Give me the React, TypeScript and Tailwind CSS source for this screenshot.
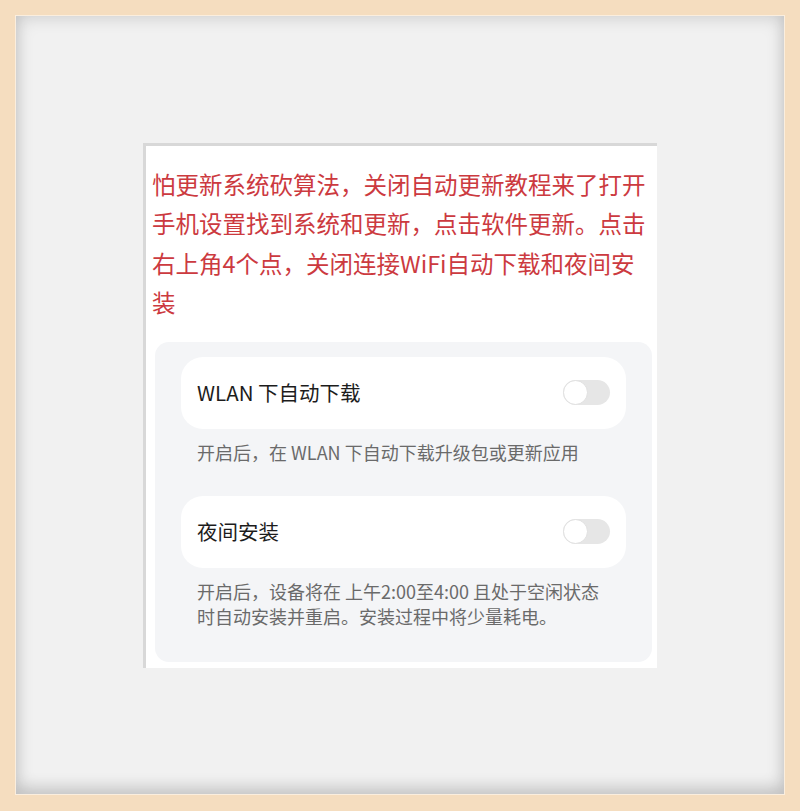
import React from "react";

const CJK = '"Noto Sans CJK SC", "Noto Sans", sans-serif';

function Toggle() {
  return (
    <div className="relative h-[25px] w-[47px] rounded-full bg-[#e6e6e6]">
      <div className="absolute left-0 top-0 h-[25px] w-[25px] rounded-full border-[1.5px] border-[#e0e0e0] bg-white" />
    </div>
  );
}

function SettingRow({ label }: { label: string }) {
  return (
    <div className="flex h-[72px] items-center justify-between rounded-[22px] bg-white pl-[16px] pr-[16px]">
      <span className="text-[20.5px] text-[#1c1c1c]">{label}</span>
      <Toggle />
    </div>
  );
}

export default function App() {
  const heading = [
    "怕更新系统砍算法，关闭自动更新教程来了打开",
    "手机设置找到系统和更新，点击软件更新。点击",
    "右上角4个点，关闭连接WiFi自动下载和夜间安",
    "装",
  ];

  return (
    <div
      className="h-[811px] w-[800px] bg-[#f5ddbf] pb-[16px] pl-[15px] pr-[15px] pt-[15px]"
      style={{ fontFamily: CJK }}
    >
      <div className="flex h-full w-full items-center justify-center border border-[#fbeede] bg-[#f1f1f1] shadow-[inset_0_0_18px_rgba(0,0,0,0.18),inset_0_-10px_14px_rgba(0,0,0,0.08)]">
        <div className="flex h-[525px] w-[514px] flex-col border-l-[3px] border-t-[3px] border-[#d8d8d8] bg-white">
          <div className="pl-[6px] pt-[19px] text-[23.5px] leading-[39.5px] text-[#cc3a3f]">
            {heading.map((line) => (
              <div key={line} className="whitespace-nowrap">
                {line}
              </div>
            ))}
          </div>

          <div className="mb-[6px] ml-[9px] mr-[5px] mt-[19px] flex-1 rounded-[14px] bg-[#f4f5f7] px-[26px] pb-[33px] pt-[15px]">
            <SettingRow label="WLAN 下自动下载" />
            <p className="mb-[31px] mt-[11px] pl-[16px] text-[18px] leading-[25px] text-[#6a6a6a]">
              开启后，在 WLAN 下自动下载升级包或更新应用
            </p>
            <SettingRow label="夜间安装" />
            <p className="mt-[11px] pl-[16px] text-[18px] leading-[25px] text-[#6a6a6a]">
              开启后，设备将在 上午2:00至4:00 且处于空闲状态
              <br />
              时自动安装并重启。安装过程中将少量耗电。
            </p>
          </div>
        </div>
      </div>
    </div>
  );
}
